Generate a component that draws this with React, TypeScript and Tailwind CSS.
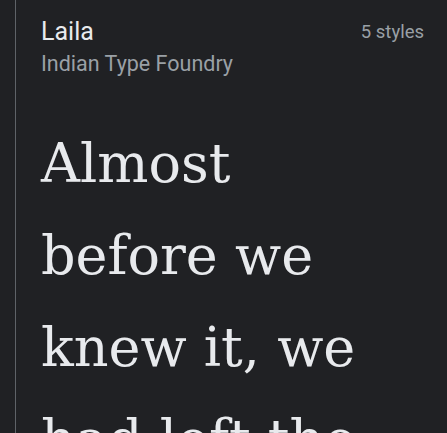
import React from 'react';

export default function App() {
  return (
    <div className="h-[433px] w-[447px] overflow-hidden bg-[#202124]">
      <div className="ml-[15px] h-full border-l border-[#5f6368] pl-[25px] pr-[23px] pt-[16px]">
        <div className="flex items-start justify-between">
          <div className="font-['Roboto',sans-serif]">
            <div className="text-[25px] leading-[32px] text-[#e8eaed]">Laila</div>
            <div className="mt-[1px] text-[21.5px] leading-[30px] text-[#9aa0a6]">Indian Type Foundry</div>
          </div>
          <div className="pt-[4px] font-['Roboto',sans-serif] text-[18.5px] leading-[24px] text-[#9aa0a6]">5 styles</div>
        </div>
        <p className="mt-[39px] w-[370px] font-['DejaVu_Serif',serif] text-[54px] leading-[92px] text-[#e8eaed]">
          Almost before we knew it, we had left the ground.
        </p>
      </div>
    </div>
  );
}
